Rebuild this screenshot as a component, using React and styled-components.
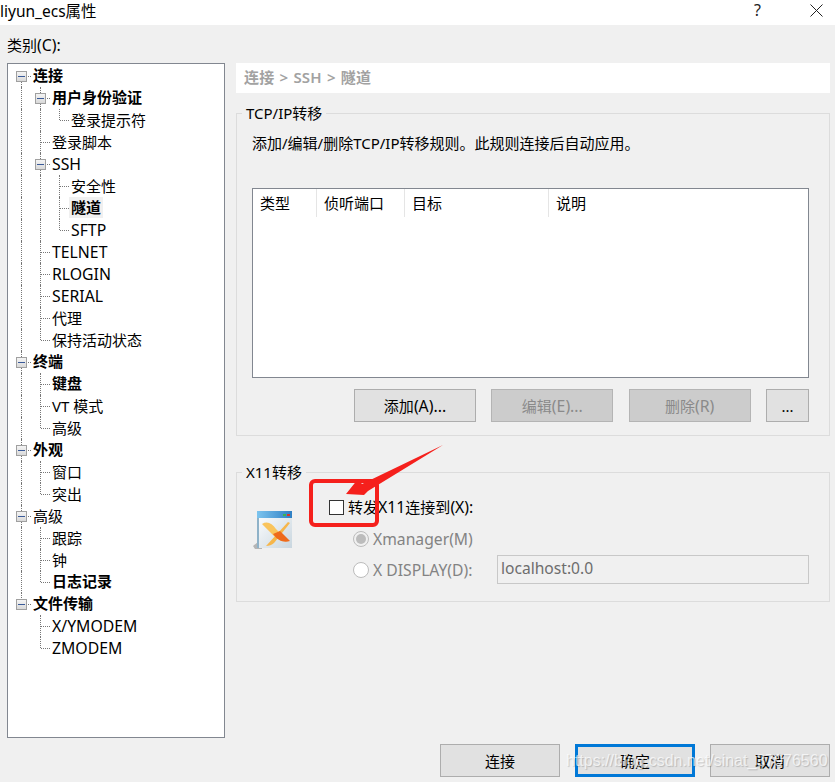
import React from 'react'
import styled, { createGlobalStyle } from 'styled-components'

const GlobalStyle = createGlobalStyle`
  html, body {
    margin: 0;
    padding: 0;
    background: #f0f0f0;
  }
  body {
    font-family: "Noto Sans", "Noto Sans CJK SC", sans-serif;
    font-size: 15px;
    color: #000;
  }
`

const Dialog = styled.div`
  position: relative;
  width: 835px;
  height: 782px;
  overflow: hidden;
  background: #f0f0f0;
`

// western runs sit a little larger than the CJK ones around them
const Latin = styled.span`
  font-size: 15.8px;
`

const TitleBar = styled.div`
  display: flex;
  align-items: center;
  height: 25px;
  padding-bottom: 5px;
  box-sizing: border-box;
  background: #fff;
  font-size: 15.5px;
`
const TitleText = styled.span`
  flex: 1;
`
const HelpGlyph = styled.span`
  width: 56px;
  font-size: 16px;
  color: #222;
`
const CloseGlyph = styled.svg`
  width: 13px;
  height: 13px;
  margin-right: 12px;
`

const Body = styled.div`
  display: flex;
`
const LeftColumn = styled.div`
  width: 218px;
  margin-left: 7px;
  margin-right: 11px;
`
const CategoryLabel = styled.div`
  height: 38px;
  line-height: 41px;
`
const TreeBox = styled.div`
  height: 675px;
  box-sizing: border-box;
  padding: 0.5px 0 0 4px;
  border: 1px solid #828790;
  background: #fff;
`

const RightColumn = styled.div`
  width: 594px;
  padding-top: 38px;
`
const Crumb = styled.div`
  height: 30px;
  line-height: 28px;
  padding-left: 8px;
  background: #fff;
  color: #a2a2a2;
  font-weight: 600;
  word-spacing: 1px;
  letter-spacing: 0.2px;
`

const Group = styled.fieldset`
  height: ${p => p.$height}px;
  box-sizing: border-box;
  margin: ${p => p.$top}px 0 0;
  padding: 0 20px 0 15px;
  min-width: 0;
  border: 1px solid #dcdcdc;
`
const GroupTitle = styled.legend`
  height: 20px;
  line-height: 20px;
  margin-left: -10px;
  padding: 0 4px;
`
const Hint = styled.div`
  height: 22px;
  line-height: 20px;
  margin-top: 10px;
`

const ListView = styled.div`
  height: 190px;
  box-sizing: border-box;
  margin-top: 33px;
  border: 1px solid #828790;
  background: #fff;
`
const ListHeader = styled.div`
  display: grid;
  grid-template-columns: 64px 88px 144px 1fr;
  height: 27px;
`
const HeaderCell = styled.div`
  padding-left: 7px;
  line-height: 28px;
  border-right: 1px solid #e5e5e5;
  &:last-child {
    border-right: 0;
  }
`

const ButtonRow = styled.div`
  display: flex;
  justify-content: flex-end;
  gap: 15.33px;
  margin-top: 11px;
`
const Button = styled.div`
  display: flex;
  align-items: center;
  justify-content: center;
  width: ${p => p.$width || 122}px;
  height: 33px;
  box-sizing: border-box;
  border: ${p => (p.$focused ? '3px solid #0078d7' : p.$disabled ? '1px solid #b4b4b4' : '1px solid #adadad')};
  background: ${p => (p.$disabled ? '#cccccc' : '#e1e1e1')};
  color: ${p => (p.$disabled ? '#8a8a8a' : '#000')};
`

const X11Layout = styled.div`
  display: flex;
`
const AppIcon = styled.svg`
  width: 44px;
  height: 40px;
  margin: 28px 33px 0 0;
`
const X11Options = styled.div`
  display: flex;
  flex-direction: column;
  padding-top: 14px;
`
const CheckRow = styled.div`
  display: flex;
  align-items: center;
  gap: 4px;
  height: 22px;
`
const CheckBox = styled.span`
  width: 15px;
  height: 15px;
  box-sizing: border-box;
  border: 1px solid #333;
  background: #fff;
`
const RadioRow = styled.div`
  display: flex;
  align-items: center;
  height: ${p => p.$height}px;
  margin-top: ${p => p.$top}px;
  margin-left: 24px;
  color: #838383;
`
const Radio = styled.span`
  display: flex;
  align-items: center;
  justify-content: center;
  width: 16px;
  height: 16px;
  box-sizing: border-box;
  margin-right: 4px;
  border: 1px solid #bcbcbc;
  border-radius: 50%;
  background: ${p => (p.$checked ? '#f0f0f0' : '#fff')};
  &::after {
    content: '';
    width: 10px;
    height: 10px;
    border-radius: 50%;
    background: ${p => (p.$checked ? '#bcbcbc' : 'transparent')};
  }
`
const RadioLabel = styled.span`
  width: 124px;
  font-size: 15.7px;
`
const HostField = styled.div`
  width: 312px;
  height: 29px;
  box-sizing: border-box;
  padding-left: 3px;
  line-height: 25px;
  border: 1px solid #c8c8c8;
  color: #6d6d6d;
  font-size: 15.6px;
`

const Footer = styled.div`
  display: flex;
  justify-content: flex-end;
  gap: 15px;
  margin: 6px 5px 0 0;
`
const FooterButton = styled(Button)`
  width: 120px;
`

// tree rows: each level of depth is one 19px cell carrying its dotted guides
const Row = styled.div`
  display: flex;
  align-items: stretch;
  height: 22.03px;
`
const Guide = styled.div`
  position: relative;
  flex: none;
  width: 19px;
  &::before {
    content: '';
    display: ${p => (p.$kind === 'none' ? 'none' : 'block')};
    position: absolute;
    left: 9px;
    top: ${p => (p.$kind === 'first' ? '50%' : '0')};
    bottom: ${p => (p.$kind === 'corner' ? '50%' : '0')};
    border-left: 1px dotted #777;
  }
  &::after {
    content: '';
    display: ${p => (p.$kind === 'through' || p.$kind === 'none' ? 'none' : 'block')};
    position: absolute;
    left: 10px;
    right: 0;
    top: 50%;
    border-top: 1px dotted #777;
  }
`
const Expander = styled.span`
  position: absolute;
  z-index: 1;
  left: 4px;
  top: 6px;
  width: 11px;
  height: 11px;
  box-sizing: border-box;
  border: 1px solid #a0a0a0;
  background: linear-gradient(#f4f4f4, #d9d9d9);
  &::after {
    content: '';
    position: absolute;
    left: 1px;
    right: 1px;
    top: 4px;
    height: 1px;
    background: #3a5a98;
  }
`
const Label = styled.span`
  align-self: center;
  margin-left: 2px;
  line-height: 21px;
  white-space: nowrap;
  padding-top: ${p => (p.$bold ? 0 : 1)}px;
  font-size: ${p => (p.$latin ? '15.8px' : '15px')};
  font-weight: ${p => (p.$bold ? 700 : 400)};
  background: ${p => (p.$selected ? '#f0f0f0' : 'transparent')};
  ${p => p.$selected && 'margin-left: 0; padding: 0 2px;'}
`

const TREE = [
  { label: '连接', bold: true, children: [
    { label: '用户身份验证', bold: true, children: [{ label: '登录提示符' }] },
    { label: '登录脚本' },
    { label: 'SSH', children: [
      { label: '安全性' },
      { label: '隧道', bold: true, selected: true },
      { label: 'SFTP' },
    ] },
    { label: 'TELNET' },
    { label: 'RLOGIN' },
    { label: 'SERIAL' },
    { label: '代理' },
    { label: '保持活动状态' },
  ] },
  { label: '终端', bold: true, children: [
    { label: '键盘', bold: true },
    { label: 'VT 模式' },
    { label: '高级' },
  ] },
  { label: '外观', bold: true, children: [{ label: '窗口' }, { label: '突出' }] },
  { label: '高级', children: [
    { label: '跟踪' },
    { label: '钟' },
    { label: '日志记录', bold: true },
  ] },
  { label: '文件传输', bold: true, children: [{ label: 'X/YMODEM' }, { label: 'ZMODEM' }] },
]

const TreeNode = ({ node, trail, last, first }) => (
  <>
    <Row>
      {trail.map((open, i) => <Guide key={i} $kind={open ? 'through' : 'none'} />)}
      <Guide $kind={first ? 'first' : last ? 'corner' : 'tee'}>
        {node.children && <Expander />}
      </Guide>
      <Label $bold={node.bold} $selected={node.selected} $latin={/^[A-Z/]+$/.test(node.label)}>
        {node.label}
      </Label>
    </Row>
    {node.children && node.children.map((child, i) => (
      <TreeNode
        key={child.label}
        node={child}
        trail={[...trail, !last]}
        last={i === node.children.length - 1}
      />
    ))}
  </>
)

// marker drawn over the dialog
const RedFrame = styled.div`
  position: absolute;
  left: 309px;
  top: 479px;
  width: 70px;
  height: 48px;
  box-sizing: border-box;
  border: 4px solid #f5201c;
  border-radius: 6px;
`
const RedArrow = styled.svg`
  position: absolute;
  left: 340px;
  top: 440px;
  width: 110px;
  height: 60px;
`
const Watermark = styled.div`
  position: absolute;
  left: 566px;
  top: 752px;
  font-family: "Liberation Sans", sans-serif;
  font-size: 16px;
  color: rgba(255, 255, 255, 0.7);
  text-shadow: 1px 1px 1px rgba(0, 0, 0, 0.18);
  white-space: nowrap;
`

const App = () => (
  <Dialog>
    <GlobalStyle />
    <TitleBar>
      <TitleText>liyun_ecs属性</TitleText>
      <HelpGlyph>?</HelpGlyph>
      <CloseGlyph viewBox="0 0 13 13">
        <path d="M0.5 0.5L12.5 12.5M12.5 0.5L0.5 12.5" stroke="#222" strokeWidth="1" fill="none" />
      </CloseGlyph>
    </TitleBar>
    <Body>
      <LeftColumn>
        <CategoryLabel>类别<Latin>(C):</Latin></CategoryLabel>
        <TreeBox>
          {TREE.map((node, i) => (
            <TreeNode
              key={node.label}
              node={node}
              trail={[]}
              first={i === 0}
              last={i === TREE.length - 1}
            />
          ))}
        </TreeBox>
      </LeftColumn>
      <RightColumn>
        <Crumb>连接 &gt; SSH &gt; 隧道</Crumb>
        <Group $height={333} $top={10}>
          <GroupTitle>TCP/IP转移</GroupTitle>
          <Hint>添加/编辑/删除TCP/IP转移规则。此规则连接后自动应用。</Hint>
          <ListView>
            <ListHeader>
              <HeaderCell>类型</HeaderCell>
              <HeaderCell>侦听端口</HeaderCell>
              <HeaderCell>目标</HeaderCell>
              <HeaderCell>说明</HeaderCell>
            </ListHeader>
          </ListView>
          <ButtonRow>
            <Button><span>添加<Latin>(A)...</Latin></span></Button>
            <Button $disabled><span>编辑<Latin>(E)...</Latin></span></Button>
            <Button $disabled><span>删除<Latin>(R)</Latin></span></Button>
            <Button $width={43}>...</Button>
          </ButtonRow>
        </Group>
        <Group $height={140} $top={26}>
          <GroupTitle>X11转移</GroupTitle>
          <X11Layout>
            <AppIcon viewBox="0 0 44 40">
              <defs>
                <linearGradient id="winBar" x1="0" y1="0" x2="1" y2="0">
                  <stop offset="0" stopColor="#7cc4ee" />
                  <stop offset="1" stopColor="#2f7fc4" />
                </linearGradient>
                <linearGradient id="winBody" x1="0" y1="0" x2="1" y2="1">
                  <stop offset="0" stopColor="#ffffff" />
                  <stop offset="1" stopColor="#c9d6df" />
                </linearGradient>
              </defs>
              <path d="M1 36l5-4h4v7H3z" fill="#b5b5b5" />
              <rect x="5" y="1" width="35" height="37" fill="url(#winBody)" />
              <rect x="5" y="1" width="2" height="37" fill="#8fb2c8" />
              <rect x="5" y="1" width="35" height="7" fill="url(#winBar)" />
              <rect x="31" y="4" width="3" height="2" fill="#3fb34f" />
              <rect x="35" y="4" width="3" height="2" fill="#d9342b" />
              <path d="M10 14c5-3 10-1 14 5l12 12c-6 1-10-1-14-5z" fill="#f9c45c" />
              <path d="M36 12L14 36c3 0 6-1 8-3l16-20z" fill="#f6b64a" />
              <path d="M21 24l7-3 10 10c-6 2-12 0-17-7z" fill="#ee6a1c" />
            </AppIcon>
            <X11Options>
              <CheckRow>
                <CheckBox />
                <span>转发<Latin>X11</Latin>连接到<Latin>(X):</Latin></span>
              </CheckRow>
              <RadioRow $height={22} $top={10}>
                <Radio $checked />
                <RadioLabel>Xmanager(M)</RadioLabel>
              </RadioRow>
              <RadioRow $height={29} $top={5}>
                <Radio />
                <RadioLabel>X DISPLAY(D):</RadioLabel>
                <HostField>localhost:0.0</HostField>
              </RadioRow>
            </X11Options>
          </X11Layout>
        </Group>
      </RightColumn>
    </Body>
    <Footer>
      <FooterButton>连接</FooterButton>
      <FooterButton $focused>确定</FooterButton>
      <FooterButton>取消</FooterButton>
    </Footer>
    <RedFrame />
    <RedArrow viewBox="0 0 110 60">
      <path d="M6 54L18 39L22 44L103 5L28 51L24 55z" fill="#f5201c" />
    </RedArrow>
    <Watermark>https://blog.csdn.net/sinat_37976560</Watermark>
  </Dialog>
)

export default App
